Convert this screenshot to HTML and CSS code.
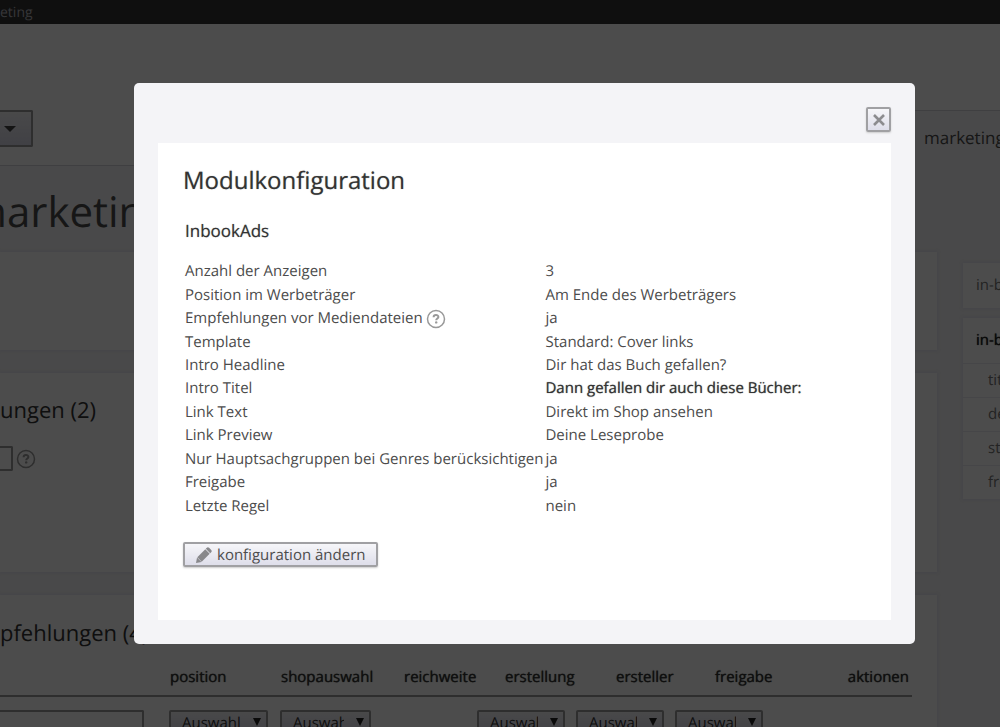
FILE: index.html
```html
<!DOCTYPE html>
<html lang="de">
<head>
<meta charset="utf-8">
<meta name="viewport" content="width=device-width, initial-scale=1">
<title>Modulkonfiguration</title>
<link rel="stylesheet" href="styles.css">
</head>
<body>
<div class="page">
  <nav class="topbar"><a href="#">eting</a></nav>
  <header class="header">
    <button class="dropdown" type="button" aria-label="Menü">
      <svg width="12" height="6" viewBox="0 0 12 6"><path d="M0 0h12L6 6z" fill="#444"/></svg>
    </button>
    <div class="crumbs"><a href="#">marketing</a></div>
  </header>
  <h1 class="title">marketing</h1>
  <div class="columns">
    <main class="main">
      <section class="panel panel-short"></section>
      <section class="panel panel-tall">
        <h2 class="panel-title">ungen (2)</h2>
        <div class="field">
          <input class="mini-input" type="text" aria-label="Empfehlung">
          <svg class="help" viewBox="0 0 20 20"><circle cx="10" cy="10" r="8.5" fill="none" stroke="currentColor" stroke-width="1.5"/><path d="M7.6 8.200c0-2.900 4.800-2.700 4.800-.3 0 1.500-2.200 1.700-2.200 3.300" fill="none" stroke="currentColor" stroke-width="2"/><circle cx="10.200" cy="13.400" r="1.200" fill="currentColor"/></svg>
        </div>
      </section>
      <section class="panel panel-list">
        <h2 class="panel-title">pfehlungen (4)</h2>
        <table class="list">
          <colgroup><col class="c-name"><col class="c-pos"><col class="c-shop"><col class="c-reach"><col class="c-date"><col class="c-date"><col></colgroup>
          <thead>
            <tr><td></td><th>position</th><th>shopauswahl</th><th>reichweite</th><th class="inset-s">erstellung</th><th class="inset">ersteller</th><th class="last"><span class="split"><span>freigabe</span><span>aktionen</span></span></th></tr>
          </thead>
          <tbody>
            <tr>
              <td><input class="filter" type="text" aria-label="Titel"></td>
              <td><span class="pick pick-l"><select aria-label="position"><option>Auswahl</option></select></span></td>
              <td><span class="pick pick-m"><select aria-label="shopauswahl"><option>Auswahl</option></select></span></td>
              <td></td>
              <td><span class="pick"><select aria-label="erstellung"><option>Auswahl</option></select></span></td>
              <td><span class="pick"><select aria-label="ersteller"><option>Auswahl</option></select></span></td>
              <td><span class="pick"><select aria-label="freigabe"><option>Auswahl</option></select></span></td>
            </tr>
          </tbody>
        </table>
      </section>
    </main>
    <aside class="side">
      <div class="box"><a class="box-head" href="#">in-book</a></div>
      <div class="box">
        <a class="box-head active" href="#">in-book</a>
        <a class="box-item" href="#">titel</a>
        <a class="box-item" href="#">details</a>
        <a class="box-item" href="#">status</a>
        <a class="box-item" href="#">freigabe</a>
      </div>
    </aside>
  </div>
</div>

<div class="overlay">
  <div class="modal" role="dialog" aria-modal="true" aria-labelledby="modal-title">
    <div class="modal-bar">
      <button class="close" type="button" aria-label="Schließen">
        <svg width="14" height="14" viewBox="0 0 14 14"><path d="M2 2l10 10M12 2L2 12" stroke="#8c8c8f" stroke-width="2.600"/></svg>
      </button>
    </div>
    <div class="modal-body">
      <h2 class="modal-title" id="modal-title">Modulkonfiguration</h2>
      <h3 class="module">InbookAds</h3>
      <table class="config">
        <tbody>
          <tr><th scope="row">Anzahl der Anzeigen</th><td>3</td></tr>
          <tr><th scope="row">Position im Werbeträger</th><td>Am Ende des Werbeträgers</td></tr>
          <tr><th scope="row"><span class="with-help">Empfehlungen vor Mediendateien <svg class="help" viewBox="0 0 20 20"><circle cx="10" cy="10" r="8.500" fill="none" stroke="currentColor" stroke-width="1.500"/><path d="M7.600 8.200c0-2.900 4.800-2.700 4.800-.3 0 1.500-2.200 1.700-2.200 3.300" fill="none" stroke="currentColor" stroke-width="2"/><circle cx="10.200" cy="13.400" r="1.200" fill="currentColor"/></svg></span></th><td>ja</td></tr>
          <tr><th scope="row">Template</th><td>Standard: Cover links</td></tr>
          <tr><th scope="row">Intro Headline</th><td>Dir hat das Buch gefallen?</td></tr>
          <tr><th scope="row">Intro Titel</th><td class="strong">Dann gefallen dir auch diese Bücher:</td></tr>
          <tr><th scope="row">Link Text</th><td>Direkt im Shop ansehen</td></tr>
          <tr><th scope="row">Link Preview</th><td>Deine Leseprobe</td></tr>
          <tr><th scope="row">Nur Hauptsachgruppen bei Genres berücksichtigen</th><td>ja</td></tr>
          <tr><th scope="row">Freigabe</th><td>ja</td></tr>
          <tr><th scope="row">Letzte Regel</th><td>nein</td></tr>
        </tbody>
      </table>
      <button class="edit" type="button">
        <svg width="16" height="16" viewBox="0 0 16 16" fill="#88888b"><path d="M0 16l1-5.500 4.500 4.500z"/><path d="M1.300 10.300L9.300 2.300l4.400 4.400-8 8z"/><path d="M9.800 1.800l1-1c.7-.7 1.600-.7 2.300 0l2.100 2.100c.7.700.7 1.600 0 2.300l-1 1z"/></svg>
        konfiguration ändern
      </button>
    </div>
  </div>
</div>
</body>
</html>
```
FILE: styles.css
```css
* { box-sizing: border-box; }

body {
  margin: 0;
  height: 100vh;
  overflow: hidden;
  font-family: "Open Sans", "Noto Sans", sans-serif;
  font-size: 15px;
  color: #4c4c4c;
  background: #f4f4f7;
  text-rendering: geometricPrecision;
}

h1, h2, h3 { margin: 0; font-weight: 400; }
a { color: inherit; text-decoration: none; }
button, input, select { font: inherit; color: inherit; text-rendering: inherit; }

/* page */
.page { height: 100%; overflow: hidden; }
.topbar {
  height: 24px;
  background: #333;
  color: #b4b4bc;
  font-size: 14px;
  line-height: 26px;
}
.header {
  display: flex;
  justify-content: space-between;
  align-items: flex-start;
  height: 142px;
  background: #fff;
  border-bottom: 1px solid #d4d4da;
}
.dropdown {
  width: 33px;
  height: 37px;
  margin-top: 86px;
  padding: 0 15px 0 4px;
  border: 2px solid #999;
  border-left: 0;
  border-radius: 0 2px 2px 0;
  background: linear-gradient(#f4f4f7, #d8d8e6);
  line-height: 0;
}
.crumbs {
  width: 85px;
  height: 56px;
  margin-top: 86px;
  padding-left: 9px;
  border-top: 1px solid #d4d4da;
  background: #f4f4f7;
  font-size: 17px;
  line-height: 54px;
}
.title {
  height: 86px;
  margin-left: -32px;
  font-size: 42px;
  line-height: 92px;
}
.columns { display: flex; gap: 26px; }
.main { flex: 1; display: flex; flex-direction: column; gap: 23px; min-width: 0; }
.panel {
  background: #fff;
  box-shadow: 0 0 3px 2px #ebebf2;
  color: #333;
}
.panel-short { height: 98px; }
.panel-tall { height: 199px; padding-top: 21px; }
.panel-list { height: 300px; padding-top: 22px; }
.panel-title { font-size: 22px; line-height: 32px; }
.field { display: flex; align-items: center; gap: 3px; margin-top: 20px; color: #888; }
.mini-input { width: 13px; height: 25px; padding: 0; border: 2px solid #999; border-left: 0; border-radius: 0 2px 2px 0; background: #fff; }
.help { width: 20px; height: 20px; color: #999; }

.list { width: 912px; margin-top: 11px; border-collapse: collapse; table-layout: fixed; }
.list th, .list td { padding: 0; text-align: left; white-space: nowrap; }
.list thead td, .list th { height: 36px; border-bottom: 2px solid #999; }
.list th { padding: 0 0 1px 1px; font-weight: 400; text-shadow: 0 0 1px #333; }
.list tbody td { padding-top: 13px; vertical-align: top; }
.list th.inset-s { padding-left: 28px; }
.list th.inset, .list th.last { padding-left: 40px; }
.list th.last { padding-right: 3px; }
.split { display: flex; justify-content: space-between; }
.c-name { width: 169px; }
.c-pos { width: 111px; }
.c-shop { width: 123px; }
.c-reach { width: 74px; }
.c-date { width: 99px; }
.filter { width: 144px; height: 26px; border: 2px solid #999; border-left: 0; border-radius: 0 2px 2px 0; background: #fff; }
.pick { position: relative; display: block; width: 88px; }
.pick-l { width: 99px; }
.pick-m { width: 91px; }
.pick select {
  appearance: none;
  width: 100%;
  height: 26px;
  padding: 0 25px 0 11px;
  border: 2px solid #999;
  border-radius: 2px;
  background: linear-gradient(#f4f4f7, #d8d8e6);
}
.pick::after {
  content: "";
  position: absolute;
  top: 8px;
  right: 7px;
  border: 4px solid transparent;
  border-top: 8px solid #222;
  border-bottom: 0;
}

.side { width: 37px; display: flex; flex-direction: column; gap: 10px; margin-top: 11px; }
.box { width: 220px; background: #fff; box-shadow: 0 0 3px 2px #ebebf2; color: #777; }
.box-head { display: block; padding-left: 13px; line-height: 45px; }
.box-head.active { color: #222; text-shadow: 0 0 1px #222; }
.box-item { display: block; padding-left: 25px; border-top: 1px solid #ebebf2; line-height: 33px; }

/* modal */
.overlay {
  position: fixed;
  inset: 0;
  display: flex;
  align-items: center;
  padding: 0 85px 0 134px;
  background: rgba(0, 0, 0, .7);
}
.modal {
  flex: 1;
  padding: 24px;
  border-radius: 5px;
  background: #f4f4f7;
}
.modal-bar { display: flex; justify-content: flex-end; padding-bottom: 11px; }
.close {
  display: grid;
  place-items: center;
  width: 25px;
  height: 25px;
  padding: 0;
  border: 2px solid #a0a0a3;
  border-radius: 2px;
  background: linear-gradient(#f6f6f9, #dedeea);
  box-shadow: 0 1px 2px #ccc;
}
.modal-body { padding: 19px 25px 53px; background: #fff; }
.modal-title { font-size: 24px; line-height: 38px; color: #333; text-shadow: 0 0 1px #999; }
.module { margin: 18px 0 16px 2px; font-size: 17px; line-height: 26px; color: #333; text-shadow: 0 0 1px #999; }
.config { height: 258px; margin-left: 1px; border-spacing: 0; }
.config th, .config td { padding: 0 1px; font-weight: 400; text-align: left; line-height: 23px; white-space: nowrap; }
.config td.strong { color: #333; text-shadow: 0 0 1px #666; }
.with-help { display: flex; align-items: center; gap: 3px; }
.edit {
  display: flex;
  align-items: center;
  gap: 5px;
  height: 25px;
  margin-top: 24px;
  padding: 0 11px;
  border: 2px solid #a0a0a3;
  border-radius: 2px;
  background: linear-gradient(#f6f6f9, #dedeea);
  box-shadow: 0 1px 2px #ccc;
}
```
